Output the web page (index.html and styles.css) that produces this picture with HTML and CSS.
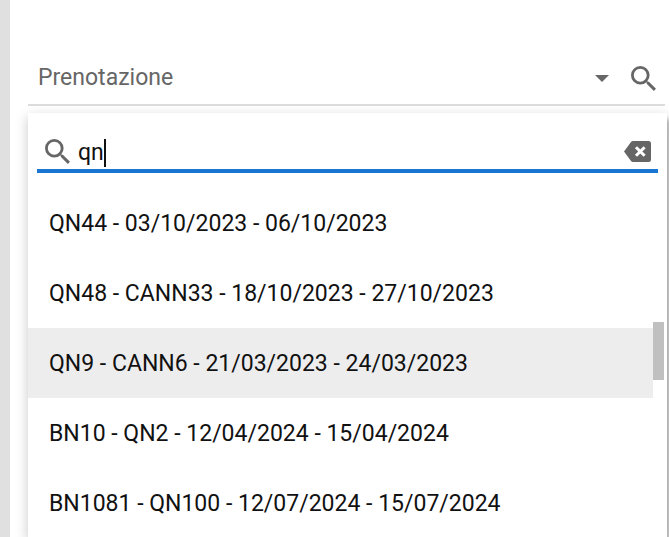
FILE: index.html
```html
<!DOCTYPE html>
<html lang="it">
<head>
<meta charset="utf-8">
<meta name="viewport" content="width=device-width, initial-scale=1">
<title>Prenotazione</title>
<link rel="stylesheet" href="styles.css">
</head>
<body>
<main class="page">
  <div class="field">
    <button class="select" type="button" aria-haspopup="listbox" aria-expanded="true">
      <span>Prenotazione</span>
      <svg class="arrow" viewBox="0 0 14 7" aria-hidden="true"><path d="M0 0h14L7 7z"/></svg>
    </button>
    <button class="icon-button" type="button" aria-label="Cerca">
      <svg class="search-icon" viewBox="3 3 17.5 17.5" aria-hidden="true"><path d="M15.500 14h-.79l-.28-.27A6.471 6.471 0 0 0 16 9.500 6.500 6.500 0 1 0 9.500 16c1.610 0 3.090-.59 4.230-1.570l.27.28v.79l5 4.990L20.490 19l-4.990-5zm-6 0C7.010 14 5 11.990 5 9.500S7.010 5 9.500 5 14 7.010 14 9.500 11.990 14 9.500 14z"/></svg>
    </button>
  </div>
  <section class="panel">
    <div class="search">
      <svg class="search-icon" viewBox="3 3 17.5 17.5" aria-hidden="true"><path d="M15.500 14h-.79l-.28-.27A6.471 6.471 0 0 0 16 9.500 6.500 6.500 0 1 0 9.500 16c1.610 0 3.090-.59 4.230-1.570l.27.28v.79l5 4.990L20.490 19l-4.990-5zm-6 0C7.010 14 5 11.990 5 9.500S7.010 5 9.500 5 14 7.010 14 9.500 11.990 14 9.500 14z"/></svg>
      <div class="entry">
        <input class="query" type="text" value="qn" aria-label="Cerca prenotazione">
        <span class="caret"></span>
      </div>
      <button class="icon-button" type="button" aria-label="Cancella">
        <svg class="clear-icon" viewBox="0 0 27 21" aria-hidden="true"><path class="tag" d="M9 0h15.500A2.500 2.500 0 0 1 27 2.500v16a2.500 2.500 0 0 1-2.500 2.500H9q-1.200 0-2-1.100L0 10.500 7 1.100Q7.800 0 9 0z"/><path class="cross" d="M12 6.200l8.600 8.600M20.600 6.200L12 14.800"/></svg>
      </button>
    </div>
    <div class="results">
      <ul class="options" role="listbox" aria-label="Prenotazioni">
        <li class="option" role="option">QN44 - 03/10/2023 - 06/10/2023</li>
        <li class="option" role="option">QN48 - CANN33 - 18/10/2023 - 27/10/2023</li>
        <li class="option active" role="option" aria-selected="true">QN9 - CANN6 - 21/03/2023 - 24/03/2023</li>
        <li class="option" role="option">BN10 - QN2 - 12/04/2024 - 15/04/2024</li>
        <li class="option" role="option">BN1081 - QN100 - 12/07/2024 - 15/07/2024</li>
      </ul>
      <div class="track"><div class="thumb"></div></div>
    </div>
  </section>
</main>
</body>
</html>
```
FILE: styles.css
```css
* {
  box-sizing: border-box;
}

body {
  margin: 0;
  height: 100vh;
  overflow: hidden;
  background: #fff;
  color: #111;
  font: 23px/28px Roboto, sans-serif;
}

button,
input {
  margin: 0;
  padding: 0;
  border: 0;
  outline: 0;
  background: none;
  color: inherit;
  font: inherit;
}

svg {
  display: block;
  fill: #666;
}

.page {
  display: flex;
  flex-direction: column;
  height: 100%;
  padding: 52px 2px 0 18px;
  border-left: 10px solid #e0e0e0;
}

.field {
  display: flex;
  align-items: center;
  flex: none;
  height: 54px;
  margin-right: 2px;
  padding: 0 9px 0 10px;
  border-bottom: 2px solid #dcdcdc;
}

.select {
  display: flex;
  flex: 1;
  align-items: center;
  justify-content: space-between;
  color: #666;
}

.arrow {
  width: 14px;
  height: 7px;
}

.icon-button {
  margin-left: 22px;
}

.search-icon {
  flex: none;
  width: 25px;
  height: 25px;
}

.panel {
  flex: 1;
  margin-top: 7px;
  background: #fff;
  box-shadow: 0 4px 12px rgba(0, 0, 0, 0.22), 4px 6px 4px rgba(0, 0, 0, 0.22);
}

.search {
  display: flex;
  align-items: center;
  height: 60px;
  margin: 0 9px;
  padding: 20px 7px 0 8px;
  border-bottom: 4px solid #1976d2;
}

.entry {
  display: flex;
  flex: 1;
  margin-left: 8px;
  padding-top: 4px;
}

.query {
  field-sizing: content;
}

.caret {
  width: 2px;
  height: 28px;
  background: #111;
}

.clear-icon {
  width: 27px;
  height: 21px;
}

.cross {
  fill: none;
  stroke: #fff;
  stroke-width: 3;
}

.results {
  display: flex;
  margin-top: 15px;
  padding-right: 3px;
}

.options {
  flex: 1;
  margin: 0;
  padding: 0;
  list-style: none;
}

.option {
  padding: 22px 21px 20px;
}

.active {
  background: #ededed;
}

.track {
  width: 11px;
  padding-top: 134px;
}

.thumb {
  height: 58px;
  background: #c0c0c0;
}
```
